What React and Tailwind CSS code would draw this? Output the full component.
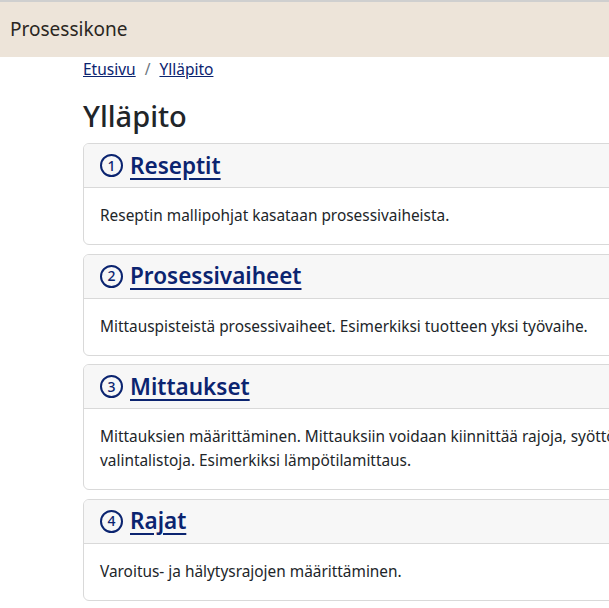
export default function App() {
  const cards = [
    {
      n: "1",
      title: "Reseptit",
      text: "Reseptin mallipohjat kasataan prosessivaiheista.",
    },
    {
      n: "2",
      title: "Prosessivaiheet",
      text: "Mittauspisteistä prosessivaiheet. Esimerkiksi tuotteen yksi työvaihe.",
    },
    {
      n: "3",
      title: "Mittaukset",
      text: "Mittauksien määrittäminen. Mittauksiin voidaan kiinnittää rajoja, syöttökenttiä ja valintalistoja. Esimerkiksi lämpötilamittaus.",
    },
    {
      n: "4",
      title: "Rajat",
      text: "Varoitus- ja hälytysrajojen määrittäminen.",
    },
  ];

  return (
    <div
      className="w-[609px] h-[608px] overflow-hidden bg-white text-[#212529]"
      style={{ fontFamily: '"Noto Sans", sans-serif' }}
    >
      {/* NAVBAR */}
      <div className="h-[57px] bg-[#ede4d9] border-t-2 border-[#cfcfcf] flex items-center px-[10px]">
        <span className="text-[19px] text-[#2a2622]">Prosessikone</span>
      </div>

      {/* CONTENT */}
      <div className="pl-[83px] w-[720px]">
        <div className="flex items-center gap-[9px] text-[15.5px] mt-[1px] h-[24px]">
          <a href="#" className="text-[#0b2470] underline">Etusivu</a>
          <span className="text-[#6c757d]">/</span>
          <a href="#" className="text-[#0b2470] underline">Ylläpito</a>
        </div>

        <h1 className="text-[29px] font-medium mt-[13px] mb-[6px] leading-[42px]">Ylläpito</h1>

        <div className="flex flex-col gap-[8.5px]">
          {cards.map((c) => (
            <div key={c.n} className="border border-[#d9d9d9] rounded-[6px] overflow-hidden">
              <div className="bg-[#f7f7f7] border-b border-[#d9d9d9] h-[44px] flex items-center px-[16px]">
                <span className="w-[23px] h-[23px] rounded-full border-2 border-[#0b2470] text-[#0b2470] text-[14px] font-medium flex items-center justify-center leading-none">
                  {c.n}
                </span>
                <a href="#" className="text-[22.5px] font-semibold text-[#0b2470] underline underline-offset-[4px] pl-[7px]">
                  {c.title}
                </a>
              </div>
              <div className="px-[16px] py-[16px] text-[15.4px] leading-[24px] w-[640px]">{c.text}</div>
            </div>
          ))}
        </div>
      </div>
    </div>
  );
}
